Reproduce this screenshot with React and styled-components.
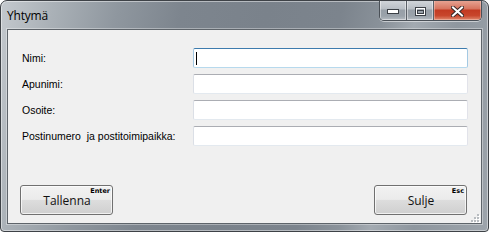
import styled, { createGlobalStyle } from "styled-components";

const GlobalStyle = createGlobalStyle`
  html, body {
    margin: 0;
    padding: 0;
    background: #ffffff;
  }
  body {
    font-family: "Liberation Sans", Arial, sans-serif;
  }
`;

const fields = [
  { label: "Nimi:", focused: true },
  { label: "Apunimi:" },
  { label: "Osoite:" },
  { label: "Postinumero  ja postitoimipaikka:" },
];

const App = () => {
  return (
    <>
      <GlobalStyle />
      <Window>
        <TitleBar>
          <Title>Yhtymä</Title>
          <Captions>
            <CaptionButton>
              <svg width="12" height="5" viewBox="0 0 12 5">
                <rect x="0.5" y="0.5" width="11" height="4" fill="#fff" stroke="#3b4046" />
              </svg>
            </CaptionButton>
            <CaptionButton>
              <svg width="11" height="9" viewBox="0 0 11 9">
                <rect x="0.5" y="0.5" width="10" height="8" fill="none" stroke="#3b4046" />
                <rect x="1.5" y="1.5" width="8" height="6" fill="none" stroke="#fff" />
                <rect x="2.5" y="3.5" width="6" height="3" fill="none" stroke="#3b4046" />
              </svg>
            </CaptionButton>
            <CloseButton>
              <svg width="13" height="11" viewBox="0 0 13 11">
                <path d="M2 1.5 L11 9.5 M11 1.5 L2 9.5" stroke="#3a2a28" strokeWidth="4" strokeLinecap="square" />
                <path d="M2 1.5 L11 9.5 M11 1.5 L2 9.5" stroke="#fff" strokeWidth="2" strokeLinecap="square" />
              </svg>
            </CloseButton>
          </Captions>
        </TitleBar>

        <Client>
          <Form>
            {fields.map((f) => (
              <Row key={f.label}>
                <Label>{f.label}</Label>
                <TextBox $focused={f.focused}>{f.focused && <Caret />}</TextBox>
              </Row>
            ))}
          </Form>

          <ButtonRow>
            <Button>
              Tallenna
              <Shortcut>Enter</Shortcut>
            </Button>
            <Button>
              Sulje
              <Shortcut>Esc</Shortcut>
            </Button>
          </ButtonRow>

          <Grip width="10" height="10" viewBox="0 0 10 10">
            {[
              [7, 1],
              [4, 4],
              [7, 4],
              [1, 7],
              [4, 7],
              [7, 7],
            ].map(([x, y]) => (
              <g key={`${x}-${y}`}>
                <rect x={x + 1} y={y + 1} width="2" height="2" fill="#ffffff" />
                <rect x={x} y={y} width="2" height="2" fill="#b8bcc0" />
              </g>
            ))}
          </Grip>
        </Client>
      </Window>
    </>
  );
};

const Window = styled.div`
  box-sizing: border-box;
  width: 489px;
  height: 232px;
  display: flex;
  flex-direction: column;
  padding: 0 6px 7px;
  border: 1px solid #3e4247;
  border-radius: 7px 7px 4px 4px;
  background: linear-gradient(
    102deg,
    #c4c9ce 0%,
    #aab1b7 10%,
    #8f979f 22%,
    #7d858e 34%,
    #7a828b 50%,
    #7c848d 64%,
    #8a929a 72%,
    #a3aab1 78%,
    #8f979f 86%,
    #9da4ab 100%
  );
  box-shadow: inset 0 0 0 1px rgba(255, 255, 255, 0.45);
  overflow: hidden;
`;

const TitleBar = styled.div`
  height: 28px;
  display: flex;
  justify-content: space-between;
  align-items: flex-start;
`;

const Title = styled.div`
  padding-top: 7px;
  font-family: "Open Sans", "Noto Sans", sans-serif;
  font-size: 12px;
  line-height: 16px;
  color: #000;
  letter-spacing: -0.2px;
`;

const Captions = styled.div`
  display: flex;
  margin-top: -1px;
  height: 20px;
  border: 1px solid #4a5057;
  border-top: none;
  border-radius: 0 0 5px 5px;
  overflow: hidden;
  box-shadow: 0 1px 0 rgba(255, 255, 255, 0.5);
`;

const CaptionButton = styled.div`
  box-sizing: border-box;
  width: 27px;
  height: 100%;
  display: flex;
  align-items: center;
  justify-content: center;
  padding-top: 2px;
  background: linear-gradient(
    #d3d7dc 0%,
    #b9bfc5 45%,
    #979fa7 50%,
    #9aa2aa 80%,
    #b6bcc2 100%
  );
  border-right: 1px solid #5a6067;
  box-shadow: inset 0 0 0 1px rgba(255, 255, 255, 0.45);
`;

const CloseButton = styled(CaptionButton)`
  width: 47px;
  border-right: none;
  background: linear-gradient(
    #e8a898 0%,
    #d6735d 45%,
    #c23a22 50%,
    #c8462c 78%,
    #e08a70 100%
  );
  box-shadow: inset 0 0 0 1px rgba(255, 220, 210, 0.4);
`;

const Client = styled.div`
  position: relative;
  flex: 1;
  display: flex;
  flex-direction: column;
  padding: 18px 13px 8px 12px;
  background: #f0f0f0;
  border: 1px solid #5e646a;
  box-shadow: 0 0 0 1px rgba(255, 255, 255, 0.35);
`;

const Form = styled.div`
  display: flex;
  flex-direction: column;
  gap: 6px;
`;

const Row = styled.div`
  display: grid;
  grid-template-columns: 173px 1fr;
  align-items: center;
`;

const Label = styled.div`
  padding-left: 2px;
  font-size: 10.5px;
  color: #000;
  white-space: pre;
`;

const TextBox = styled.div`
  box-sizing: border-box;
  height: 20px;
  display: flex;
  align-items: center;
  padding-left: 2px;
  background: #ffffff;
  border: 1px solid;
  border-radius: 2px;
  border-color: ${(p) =>
    p.$focused
      ? "#3d7bad #a4c9e3 #b7d9ed #a4c9e3"
      : "#abadb3 #e2e3ea #e3e9ef #dbdfe6"};
`;

const Caret = styled.span`
  width: 1px;
  height: 13px;
  background: #000;
`;

const ButtonRow = styled.div`
  margin-top: auto;
  display: flex;
  justify-content: space-between;
  padding-right: 1px;
`;

const Button = styled.div`
  position: relative;
  box-sizing: border-box;
  width: 93px;
  height: 30px;
  display: flex;
  align-items: center;
  justify-content: center;
  padding-left: 1px;
  font-family: "Open Sans", "Noto Sans", sans-serif;
  font-size: 12px;
  color: #111;
  border: 1px solid #707070;
  border-radius: 3px;
  background: linear-gradient(#f2f2f2 0%, #ebebeb 48%, #dddddd 50%, #cfcfcf 100%);
  box-shadow: inset 0 0 0 1px rgba(255, 255, 255, 0.7);
`;

const Shortcut = styled.span`
  position: absolute;
  top: 1px;
  right: 2px;
  font-family: "DejaVu Sans", sans-serif;
  font-size: 6.5px;
  font-weight: bold;
  line-height: 9px;
  color: #000;
`;

const Grip = styled.svg`
  position: absolute;
  right: 1px;
  bottom: 0;
`;

export default App;
